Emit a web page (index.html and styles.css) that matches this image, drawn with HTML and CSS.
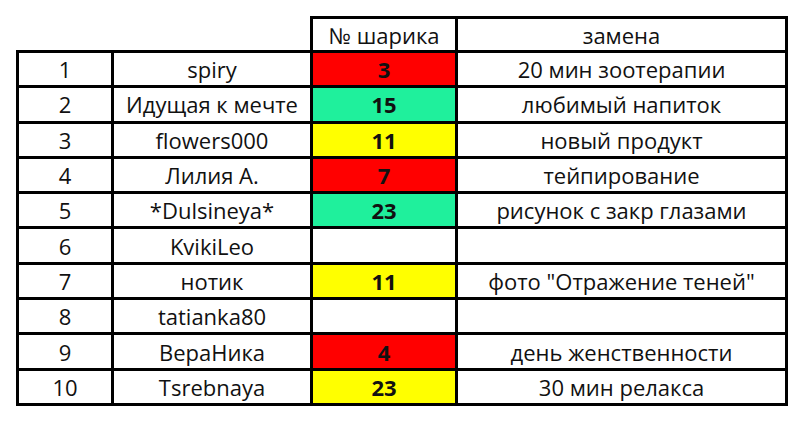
FILE: index.html
```html
<!DOCTYPE html>
<html lang="ru">
<head>
<meta charset="utf-8">
<title>Шарики</title>
<link rel="stylesheet" href="styles.css">
</head>
<body>
<table class="sheet">
  <colgroup>
    <col class="c-num"><col class="c-name"><col class="c-ball"><col class="c-prize">
  </colgroup>
  <tr class="head">
    <td class="blank"></td><td class="blank"></td><td>№ шарика</td><td>замена</td>
  </tr>
  <tr><td>1</td><td>spiry</td><td class="ball red">3</td><td>20 мин зоотерапии</td></tr>
  <tr><td>2</td><td>Идущая к мечте</td><td class="ball green">15</td><td>любимый напиток</td></tr>
  <tr><td>3</td><td>flowers000</td><td class="ball yellow">11</td><td>новый продукт</td></tr>
  <tr><td>4</td><td>Лилия А.</td><td class="ball red">7</td><td>тейпирование</td></tr>
  <tr><td>5</td><td>*Dulsineya*</td><td class="ball green">23</td><td>рисунок с закр глазами</td></tr>
  <tr><td>6</td><td>KvikiLeo</td><td class="ball"></td><td></td></tr>
  <tr><td>7</td><td>нотик</td><td class="ball yellow">11</td><td>фото "Отражение теней"</td></tr>
  <tr><td>8</td><td>tatianka80</td><td class="ball"></td><td></td></tr>
  <tr><td>9</td><td>ВераНика</td><td class="ball red">4</td><td>день женственности</td></tr>
  <tr><td>10</td><td>Tsrebnaya</td><td class="ball yellow">23</td><td>30 мин релакса</td></tr>
</table>
</body>
</html>
```
FILE: styles.css
```css
html, body {
  margin: 0;
  background: #fff;
}
.sheet {
  border-collapse: collapse;
  table-layout: fixed;
  margin: 16px 0 0 16px;
  color: #111;
  font-family: "Open Sans", "Noto Sans", sans-serif;
  font-size: 22px;
}
.c-num { width: 95px; }
.c-name { width: 199px; }
.c-ball { width: 145px; }
.c-prize { width: 330px; }
.sheet td {
  border: 3px solid #000;
  height: 32.3px;
  padding: 0;
  text-align: center;
  vertical-align: middle;
  white-space: nowrap;
  line-height: 1;
}
.sheet .head td { height: 31px; }
.sheet .head td.blank { border: none; }
.ball { font-weight: 700; }
.red { background: #ff0000; }
.green { background: #1ff09c; }
.yellow { background: #ffff00; }
```
